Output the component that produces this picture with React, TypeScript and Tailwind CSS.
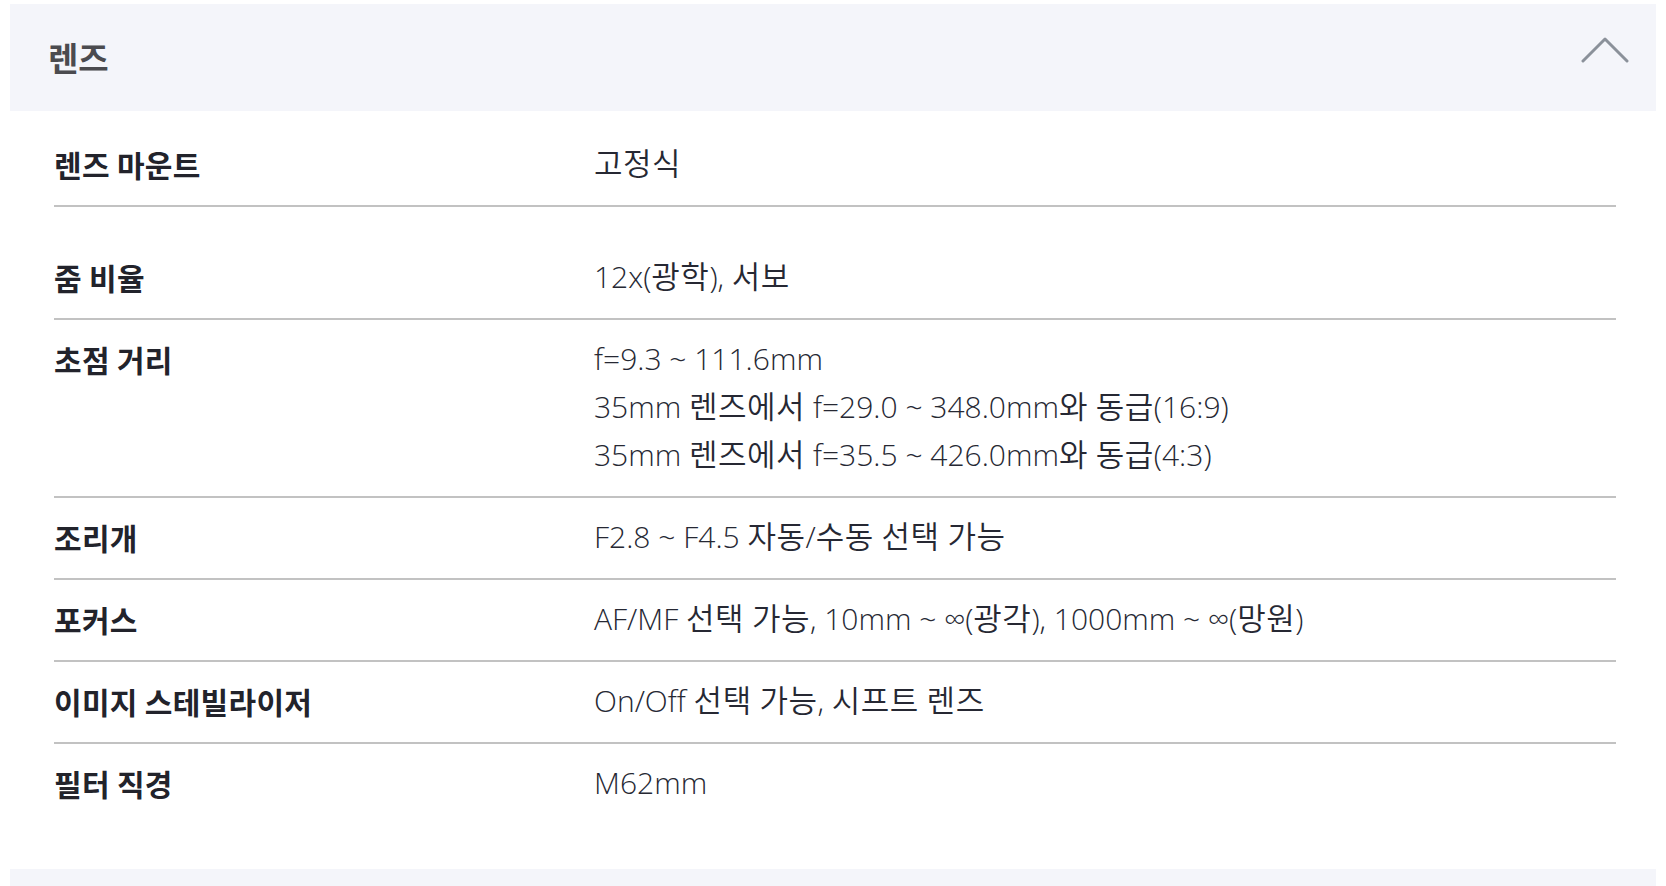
const specs: { label: string; lines: string[]; spaced?: boolean }[] = [
  { label: "렌즈 마운트", lines: ["고정식"] },
  { label: "줌 비율", lines: ["12x(광학), 서보"], spaced: true },
  {
    label: "초점 거리",
    lines: [
      "f=9.3 ~ 111.6mm",
      "35mm 렌즈에서 f=29.0 ~ 348.0mm와 동급(16:9)",
      "35mm 렌즈에서 f=35.5 ~ 426.0mm와 동급(4:3)"
    ]
  },
  { label: "조리개", lines: ["F2.8 ~ F4.5 자동/수동 선택 가능"] },
  { label: "포커스", lines: ["AF/MF 선택 가능, 10mm ~ ∞(광각), 1000mm ~ ∞(망원)"] },
  { label: "이미지 스테빌라이저", lines: ["On/Off 선택 가능, 시프트 렌즈"] },
  { label: "필터 직경", lines: ["M62mm"] }
];

// hangul runs get a slightly heavier, larger setting than the light latin
const ValueLine = ({ text }: { text: string }) => (
  <div>
    {text.split(/([가-힣]+)/).map((part, i) =>
      /[가-힣]/.test(part) ? (
        <span key={i} className="text-[31px] leading-none font-[350] tracking-[0.5px]">
          {part}
        </span>
      ) : (
        <span key={i}>{part}</span>
      )
    )}
  </div>
);

const SpecRow = ({ label, lines, spaced, last }: { label: string; lines: string[]; spaced?: boolean; last: boolean }) => (
  <div
    className={
      "grid grid-cols-[540px_1fr] leading-[48px] " +
      (spaced ? "pt-[46px] " : "pt-[15px] ") +
      (last ? "pb-[18px]" : "pb-[17px] border-b-2 border-[#c2c2c2]")
    }
  >
    <div className="text-[30px] font-bold text-[#22232b] tracking-[0.3px]">{label}</div>
    <div className="font-['Open_Sans','Noto_Sans_CJK_KR',sans-serif] text-[30px] font-light text-[#262833]">
      {lines.map((l) => (
        <ValueLine key={l} text={l} />
      ))}
    </div>
  </div>
);

export default function App() {
  return (
    <div className="min-h-screen bg-white pt-[4px] font-['Noto_Sans_CJK_KR','Noto_Sans',sans-serif]">
      <div className="mx-[10px] flex h-[107px] items-center justify-between bg-[#f4f5fa] pl-[38px] pr-[27px]">
        <h2 className="text-[33px] font-bold text-[#4b4b4f]">렌즈</h2>
        <svg className="-mt-[16px]" width="48" height="28" viewBox="0 0 48 28" fill="none">
          <polyline
            points="2,25 24,3 46,25"
            stroke="#8b919a"
            strokeWidth={3}
            strokeLinecap="round"
            strokeLinejoin="round"
          />
        </svg>
      </div>
      <div className="pl-[54px] pr-[50px] pt-[14px] pb-[44px]">
        {specs.map((s, i) => (
          <SpecRow key={s.label} label={s.label} lines={s.lines} spaced={s.spaced} last={i === specs.length - 1} />
        ))}
      </div>
      <div className="mx-[10px] h-[17px] bg-[#f4f5fa]" />
    </div>
  );
}
